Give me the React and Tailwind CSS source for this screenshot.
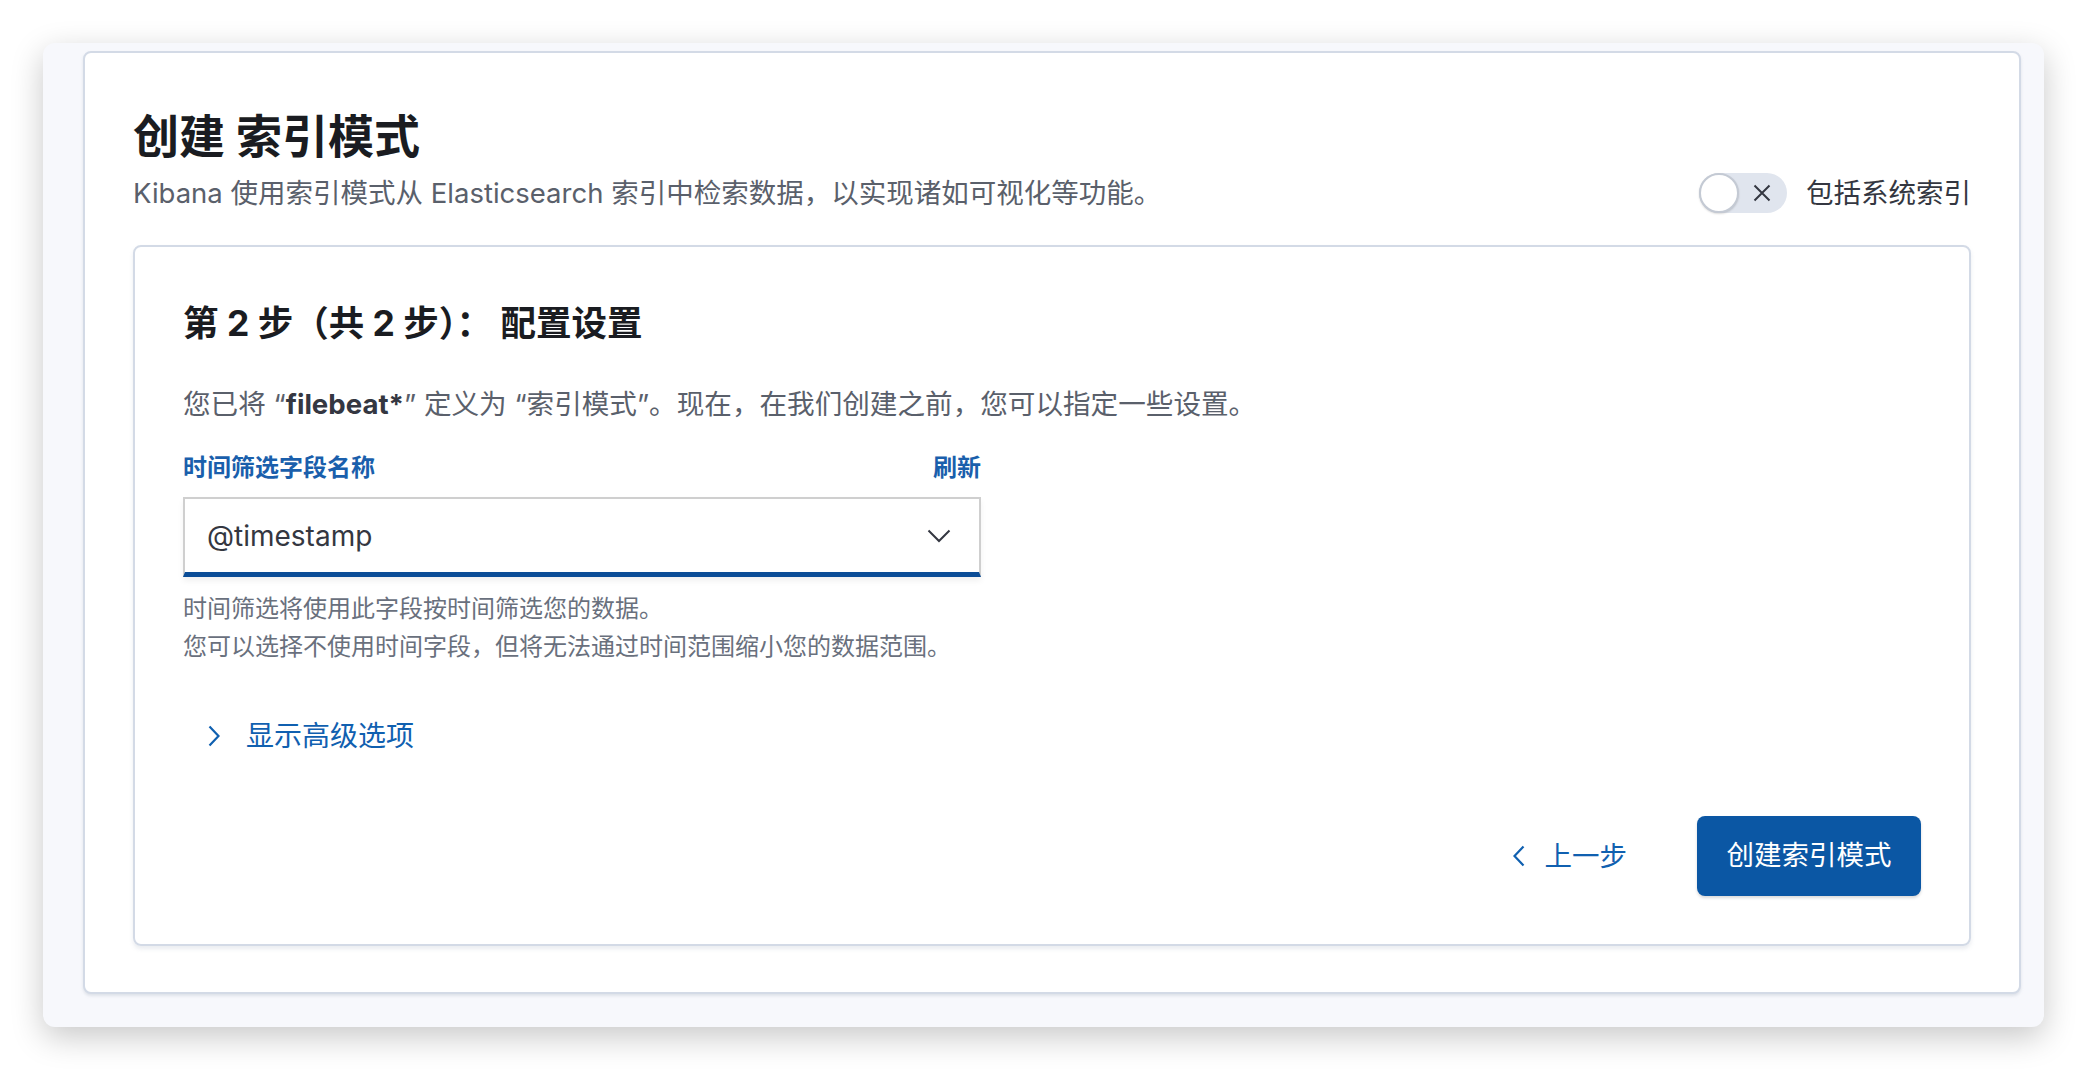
import React from "react";

const font = "font-['Inter','Noto_Sans_CJK_SC',sans-serif]";

const ChevronDown = () => (
  <svg width="24" height="14" viewBox="0 0 24 14" fill="none">
    <polyline points="1.5,1.5 12,12 22.5,1.5" stroke="#343741" strokeWidth="2" />
  </svg>
);

const ChevronRight = ({ color }) => (
  <svg width="12" height="22" viewBox="0 0 12 22" fill="none">
    <polyline points="1.5,1.5 10.5,11 1.5,20.5" stroke={color} strokeWidth="2.2" />
  </svg>
);

const ChevronLeft = ({ color }) => (
  <svg width="12" height="22" viewBox="0 0 12 22" fill="none">
    <polyline points="10.5,1.5 1.5,11 10.5,20.5" stroke={color} strokeWidth="2.2" />
  </svg>
);

const Toggle = () => (
  <div className="flex items-center">
    <div className="relative w-[88px] h-[40px] rounded-full bg-[#e0e5ee]">
      <div className="absolute left-0 top-0 w-[40px] h-[40px] rounded-full bg-white border-2 border-[#c4cad4] shadow-[0_1px_2px_rgba(0,0,0,0.15)]" />
      <svg className="absolute left-[54px] top-[11px]" width="18" height="18" viewBox="0 0 18 18" fill="none">
        <path d="M1.5 1.5 L16.5 16.5 M16.5 1.5 L1.5 16.5" stroke="#343741" strokeWidth="2" />
      </svg>
    </div>
    <span className="ml-[19px] text-[27.5px] leading-[40px] text-[#343741]">包括系统索引</span>
  </div>
);

export default function App() {
  return (
    <div className={`min-h-screen bg-white ${font}`}>
      <div className="ml-[43px] pt-[43px]">
        <div className="w-[2001px] bg-[#f7f8fc] rounded-[12px] shadow-[0_10px_32px_rgba(0,0,0,0.22)] pl-[40px] pr-[23px] pt-[8px] pb-[33px]">
          {/* 外层面板 */}
          <div className="bg-white border-2 border-[#d3dae6] rounded-[8px] shadow-[0_2px_3px_rgba(152,162,179,0.25)] px-[48px] pt-[48px] pb-[46px]">
            <div className="flex justify-between items-end">
              <div>
                <h1 className="mt-[7px] text-[46px] leading-[56px] font-bold text-[#1a1c21]">创建 索引模式</h1>
                <p className="mt-[9px] text-[27.5px] leading-[40px] text-[#5a606b]">
                  Kibana 使用索引模式从 Elasticsearch 索引中检索数据，以实现诸如可视化等功能。
                </p>
              </div>
              <Toggle />
            </div>

            {/* 步骤卡片 */}
            <div className="mt-[32px] border-2 border-[#d3dae6] rounded-[8px] shadow-[0_3px_4px_rgba(152,162,179,0.2)] px-[48px] pt-[48px] pb-[48px]">
              <h2 className="mt-[5px] text-[35.5px] leading-[48px] font-bold text-[#1a1c21]">第 2 步（共 2 步）： 配置设置</h2>
              <p className="mt-[36px] text-[27.6px] leading-[40px] text-[#5a606b]">
                您已将 “<strong className="text-[#343741] font-bold">filebeat*</strong>” 定义为 “索引模式”。现在，在我们创建之前，您可以指定一些设置。
              </p>

              <div className="w-[798px]">
                <div className="mt-[28px] flex justify-between text-[24px] leading-[32px] font-bold text-[#1a5fac]">
                  <span>时间筛选字段名称</span>
                  <span>刷新</span>
                </div>
                <div className="mt-[13px] h-[80px] flex items-center justify-between bg-white border-2 border-[#cfcfcf] border-b-[5px] border-b-[#0b4d97] shadow-[0_4px_6px_rgba(0,0,0,0.06)] pl-[22px] pr-[28px]">
                  <span className="text-[28px] text-[#343741]">@timestamp</span>
                  <ChevronDown />
                </div>
                <div className="mt-[13px] text-[24px] leading-[38px] text-[#69707d]">
                  <div>时间筛选将使用此字段按时间筛选您的数据。</div>
                  <div>您可以选择不使用时间字段，但将无法通过时间范围缩小您的数据范围。</div>
                </div>
              </div>

              <button className="mt-[50px] ml-[25px] flex items-center text-[28px] leading-[40px] text-[#1060b0]">
                <ChevronRight color="#1060b0" />
                <span className="ml-[26px]">显示高级选项</span>
              </button>

              <div className="mt-[60px] flex justify-end items-center">
                <button className="flex items-center text-[27.5px] leading-[40px] text-[#1060b0]">
                  <ChevronLeft color="#1060b0" />
                  <span className="ml-[20px]">上一步</span>
                </button>
                <button className="ml-[70px] h-[80px] w-[224px] rounded-[8px] bg-[#0b57a4] text-white text-[27.5px] shadow-[0_2px_3px_rgba(0,0,0,0.15)]">
                  创建索引模式
                </button>
              </div>
            </div>
          </div>
        </div>
      </div>
    </div>
  );
}
